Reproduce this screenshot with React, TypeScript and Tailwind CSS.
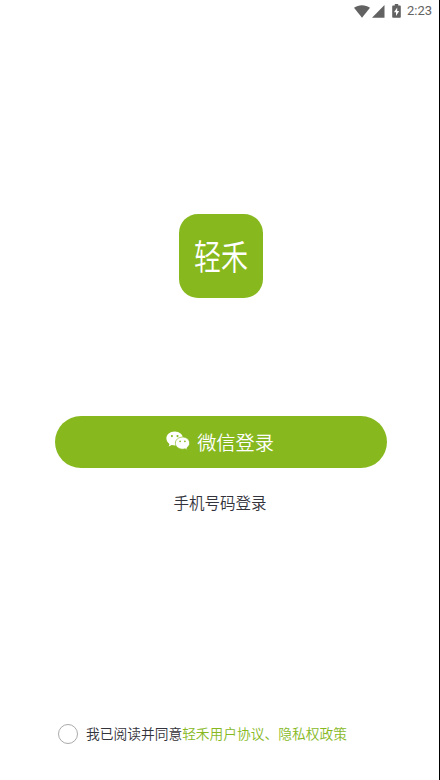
function StatusBar() {
  return (
    <header className="flex h-[22px] items-center justify-end pr-[7px] text-[#626262]">
      <svg className="mr-[2px] h-[13px] w-[16px]" viewBox="0 0 16 13" fill="currentColor">
        <path d="M0 2.8C4.5-.6 11.5-.6 16 2.8L8 12.8Z" />
      </svg>
      <svg className="mr-[7px] h-[13px] w-[13px]" viewBox="0 0 13 13" fill="currentColor">
        <path d="M12.5 0V12.7H0Z" />
      </svg>
      <svg className="mr-[6px] h-[14px] w-[9px]" viewBox="0 0 9 14">
        <path d="M2.8 0h3.4v1.5H8q.8 0 .8 1V13q0 .8-.8.8H1q-.8 0-.8-.8V2.500q0-1 .8-1h1.800Z" fill="currentColor" />
        <path d="M5.200 3.500 2 8.300h2v3.700l3.200-5H5.200Z" fill="#fff" />
      </svg>
      <span className="font-[Roboto,sans-serif] text-[13px] leading-[22px] font-normal">2:23</span>
    </header>
  );
}

function Logo() {
  return (
    <div className="mt-[192px] flex h-[84px] w-[84px] items-center justify-center self-center rounded-[19px] bg-[#87b91f] pb-[3px] pl-px">
      <span className="scale-y-[1.32] text-[27px] leading-none whitespace-nowrap text-white">轻禾</span>
    </div>
  );
}

function WechatIcon() {
  return (
    <svg className="-mt-px h-[20px] w-[24px]" viewBox="0 0 24 20">
      <path d="M8.700.6C4 .6.400 3.600.400 7.500c0 2.200 1.200 4.100 3.100 5.400L2.700 15.500l3-1.500c1 .300 2 .400 3 .400 4.700 0 8.300-3.100 8.300-6.900S13.400.6 8.700.6Z" fill="#fff" />
      <path d="M16.500 6.100c-4 0-7.100 2.600-7.100 6s3.100 6.100 7.100 6.100c.9 0 1.800-.1 2.600-.4l2.300 1.300-.600-2.200c1.700-1.100 2.800-2.800 2.800-4.800 0-3.400-3.100-6-7.100-6Z" fill="#fff" stroke="#87b91f" strokeWidth=".7" />
      <g fill="#87b91f">
        <circle cx="5.900" cy="5.100" r="1.050" />
        <circle cx="11.500" cy="5.100" r="1.050" />
        <circle cx="14.100" cy="10.300" r=".9" />
        <circle cx="18.900" cy="10.300" r=".9" />
      </g>
    </svg>
  );
}

export default function App() {
  return (
    <main className="flex h-[780px] w-[440px] flex-col border-r border-black bg-white font-['Noto_Sans_CJK_SC',sans-serif] font-[350] text-[#33333b]">
      <StatusBar />
      <div className="flex flex-1 flex-col pl-[2px]">
        <Logo />
        <button className="mt-[117.5px] flex h-[52px] w-[332px] items-center justify-center gap-[7px] self-center rounded-full bg-[#87b91f] pr-px text-white">
          <WechatIcon />
          <span className="text-[19.200px] leading-[28px]">微信登录</span>
        </button>
        <button className="mt-[22px] mr-px self-center text-[15.500px] leading-[24px]">手机号码登录</button>
        <label className="mt-auto mb-[36px] ml-[56px] flex items-center text-[13.740px] leading-[22px] whitespace-nowrap">
          <span className="mr-[8px] h-[20px] w-[20px] rounded-full border border-[#aaaaaa]" />
          <span className="-mt-[2px]">我已阅读并同意</span>
          <a className="-mt-[2px] text-[#87b91f]">轻禾用户协议、隐私权政策</a>
        </label>
      </div>
    </main>
  );
}
